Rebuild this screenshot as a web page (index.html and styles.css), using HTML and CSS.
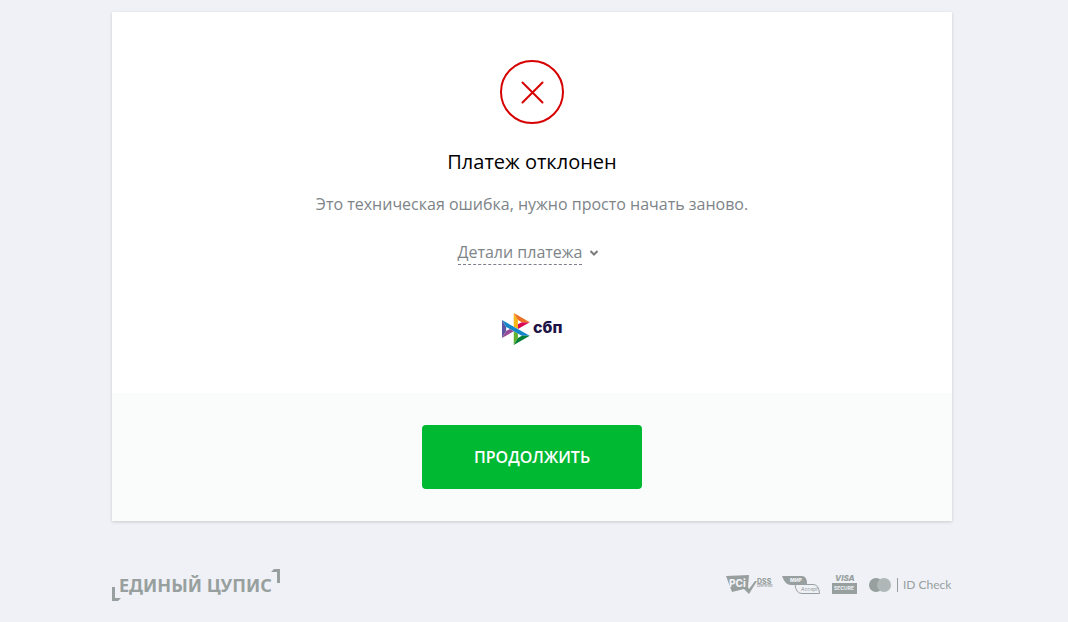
FILE: index.html
```html
<!DOCTYPE html>
<html lang="ru">
<head>
  <meta charset="UTF-8">
  <meta name="viewport" content="width=device-width, initial-scale=1">
  <title>Платеж отклонен</title>
  <link rel="stylesheet" href="styles.css">
</head>
<body>

  <div class="page">
    <main class="card">
      <div class="card-body">
        <svg class="status-icon" viewBox="0 0 64 64" aria-hidden="true">
          <circle cx="32" cy="32" r="31"/>
          <path d="M22.500 22.500l20 20M42.500 22.500l-20 20"/>
        </svg>
        <h1>Платеж отклонен</h1>
        <p class="message">Это техническая ошибка, нужно просто начать заново.</p>
        <button type="button" class="details">
          <span class="details-label">Детали платежа</span>
          <svg class="chevron" viewBox="0 0 8 6" aria-hidden="true"><path d="M0.500 1L4 4.500 7.500 1"/></svg>
        </button>
        <svg class="sbp" viewBox="0 0 60 32" role="img" aria-label="сбп">
          <svg width="28" height="32" viewBox="0 0 98 120" preserveAspectRatio="none">
            <path fill="#5b57a2" d="M0 26.12l14.53 25.97v15.85L0 93.86z"/>
            <path fill="#d90751" d="M55.8 42.64l13.61-8.34 27.87-.03L55.8 59.69z"/>
            <path fill="#fab718" d="M55.72 25.97l.08 34.39-14.57-8.95V0z"/>
            <path fill="#ed6f26" d="M97.28 34.27l-27.87.03-13.69-8.33L41.23 0z"/>
            <path fill="#63b22f" d="M55.8 94V77.32l-14.57-8.78V120z"/>
            <path fill="#1487c9" d="M69.38 85.74L14.53 52.1 0 26.12 97.22 85.7z"/>
            <path fill="#017f36" d="M41.24 120L55.8 94l13.58-8.26 27.84-.04z"/>
            <path fill="#984995" d="M0 93.86l41.35-25.32-13.9-8.52-12.92 7.92z"/>
          </svg>
          <text class="sbp-text" x="31" y="20">сбп</text>
        </svg>
      </div>
      <div class="card-actions">
        <button type="button" class="btn">Продолжить</button>
      </div>
    </main>

    <footer class="footer">
      <svg class="brand" viewBox="0 0 170 32" role="img" aria-label="Единый ЦУПИС">
        <path d="M0 18h3v11h6l-3 3H0zM159 3l3-3h6v14h-3V3z"/>
        <text x="7" y="23">ЕДИНЫЙ ЦУПИС</text>
      </svg>
      <div class="badges">
        <svg class="badge-pci" viewBox="0 0 48 20" role="img" aria-label="PCI DSS">
          <path d="M0 1l23-1-1 12 1 2 6-8h2l-8 13-5-5-12 3z"/>
          <text class="pci" x="3" y="12">PCi</text>
          <text class="dss" x="31" y="9">DSS</text>
          <text class="tiny" x="31" y="12">CERTIFIED</text>
        </svg>
        <svg class="badge-mir" viewBox="0 0 38 20" role="img" aria-label="МИР Accept">
          <path d="M0 1h20q5 0 5 8v1H9Q3 10 0 1z"/>
          <path class="outline" d="M13 9.500h18q6 0 6.500 9H20q-6 0-7-9z"/>
          <text class="mir" x="8" y="7">МИР</text>
          <text class="accept" x="19" y="16">Accept</text>
        </svg>
        <svg class="badge-visa" viewBox="0 0 25 20" role="img" aria-label="VISA SECURE">
          <text class="visa" x="3" y="6">VISA</text>
          <path d="M0 8h25v11H0z"/>
          <text class="secure" x="2" y="15">SECURE</text>
        </svg>
        <svg class="badge-id" viewBox="0 0 83 20" role="img" aria-label="ID Check">
          <circle cx="7" cy="10" r="7"/>
          <circle class="light" cx="15" cy="10" r="7"/>
          <path d="M28 3h1v14h-1z"/>
          <text x="34" y="14">ID Check</text>
        </svg>
      </div>
    </footer>
  </div>

</body>
</html>
```
FILE: styles.css
```css
* { box-sizing: border-box; }
body { margin: 0; padding: 12px 4px 0 0; background: #f0f1f6; font-family: "Open Sans", "Noto Sans", sans-serif; font-size: 16px; line-height: 24px; }
.page { max-width: 840px; margin: 0 auto; }
.card { background: #fff; box-shadow: 0 1px 3px rgba(0,0,0,0.16); }
.card-body { display: flex; flex-direction: column; align-items: center; padding: 48px 24px; }
.status-icon { width: 64px; height: 64px; fill: none; stroke: #d60000; stroke-width: 2; stroke-linecap: round; }
h1 { margin: 24px 0 16px; font-size: 20px; line-height: 28px; font-weight: 400; color: #000; }
.message { margin: 0; color: #7d8488; text-align: center; }
.details { display: flex; align-items: center; gap: 8px; margin: 24px 0 48px; padding: 0 8px 0 0; border: 0; background: none; color: #7d8488; font: inherit; cursor: pointer; }
.details-label { border-bottom: 1px dashed #7d7d8c; }
.chevron { width: 8px; height: 6px; fill: none; stroke: #7d7d7d; stroke-width: 2; }
.sbp { width: 60px; height: 32px; overflow: visible; }
.sbp-text { font-family: Inter, sans-serif; font-size: 16px; font-weight: 800; fill: #1d1346; }
.card-actions { display: flex; justify-content: center; padding: 32px 24px; background: #fafcfc; }
.btn { width: 220px; height: 64px; border: 0; border-radius: 4px; background: #00b932; color: #fff; font-family: inherit; font-size: 16px; font-weight: 600; text-transform: uppercase; cursor: pointer; }

.footer { display: flex; justify-content: space-between; align-items: center; padding: 48px 0 20px; }
.footer svg { display: block; overflow: visible; fill: #97a09e; }
.brand { width: 170px; height: 32px; font-size: 18px; font-weight: 700; font-family: "Noto Sans", sans-serif; }
.badges { display: flex; gap: 8px; font-family: Inter, sans-serif; }
.badge-pci { width: 48px; height: 20px; }
.badge-pci .pci { fill: #f0f1f6; font-size: 10px; font-weight: 800; }
.badge-pci .dss { font-size: 7px; font-weight: 800; }
.badge-pci .tiny { font-size: 3px; font-weight: 700; }
.badge-mir { width: 38px; height: 20px; }
.badge-mir .outline { fill: #f0f1f6; stroke: #97a09e; stroke-width: 1; }
.badge-mir .mir { fill: #f0f1f6; font-size: 5px; font-weight: 800; }
.badge-mir .accept { font-size: 5px; font-style: italic; }
.badge-visa { width: 25px; height: 20px; margin-left: 4px; }
.badge-visa .visa { font-size: 8px; font-weight: 800; font-style: italic; }
.badge-visa .secure { fill: #f0f1f6; font-size: 5px; font-weight: 700; }
.badge-id { width: 83px; height: 20px; margin-left: 4px; font-family: Lato, sans-serif; font-size: 12px; }
.badge-id .light { fill: #b0b7b7; }
```
